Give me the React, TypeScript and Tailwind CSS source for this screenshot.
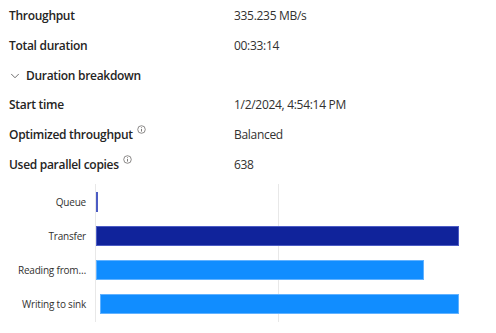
import { ChevronDown } from "lucide-react";

const details = [
  { label: "Throughput", value: "335.235 MB/s" },
  { label: "Total duration", value: "00:33:14" },
];

const breakdown = [
  { label: "Start time", value: "1/2/2024, 4:54:14 PM" },
  { label: "Optimized throughput", value: "Balanced", info: true },
  { label: "Used parallel copies", value: "638", info: true },
];

const bars = [
  { label: "Queue", start: 0, end: 0.005, fill: "bg-[#10239b] border-[#4c5cc4]" },
  { label: "Transfer", start: 0, end: 1, fill: "bg-[#10239b] border-[#4c5cc4]" },
  { label: "Reading from…", start: 0, end: 0.903, fill: "bg-[#118dff] border-[#62b2ff]" },
  { label: "Writing to sink", start: 0.011, end: 1, fill: "bg-[#118dff] border-[#62b2ff]" },
];

function InfoIcon() {
  return (
    <svg width="9" height="9" viewBox="0 0 10 10" className="ml-[4px] -mt-[11px] shrink-0 text-[#605e5c]">
      <circle cx="5" cy="5" r="4.2" fill="none" stroke="currentColor" strokeWidth="0.8" />
      <path d="M5 4.3v3" stroke="currentColor" strokeWidth="0.9" />
      <circle cx="5" cy="2.9" r="0.55" fill="currentColor" />
    </svg>
  );
}

function Row({ label, value, info }: { label: string; value?: string; info?: boolean }) {
  return (
    <div className="flex h-[29.7px] items-center">
      <div className="flex w-[225px] items-center font-semibold">
        {label}
        {info ? <InfoIcon /> : null}
      </div>
      <div className="text-[#323130]">{value}</div>
    </div>
  );
}

export default function App() {
  return (
    <div className="h-[333px] w-[496px] bg-white pt-[1.5px] pl-[9px] text-[12px] tracking-[-0.3px] text-[#252423] [font-family:'Open_Sans',sans-serif]">
      {details.map((d) => (
        <Row key={d.label} {...d} />
      ))}
      <div className="flex h-[29.7px] items-center font-semibold">
        <ChevronDown size={14} strokeWidth={1.2} className="mr-[4px] -ml-[1px] text-[#323130]" />
        Duration breakdown
      </div>
      {breakdown.map((d) => (
        <Row key={d.label} {...d} />
      ))}

      <div className="mt-[4.5px] flex">
        <div className="w-[77px] pt-[1px] text-right text-[10px] tracking-[-0.2px] text-[#323130]">
          {bars.map((b) => (
            <div key={b.label} className="flex h-[34px] items-center justify-end whitespace-nowrap">
              {b.label}
            </div>
          ))}
        </div>
        <div className="relative ml-[9px] border-l border-[#e8e8e8] pt-[1px] pb-[1px]">
          <div className="absolute top-0 bottom-0 left-[182px] w-px bg-[#e8e8e8]" />
          {bars.map((b) => (
            <div key={b.label} className="relative flex h-[34px] w-[363px] items-center">
              <div
                className={`h-[20px] min-w-[2px] border ${b.fill}`}
                style={{ marginLeft: `${b.start * 363}px`, width: `${(b.end - b.start) * 363}px` }}
              />
            </div>
          ))}
        </div>
      </div>
    </div>
  );
}
